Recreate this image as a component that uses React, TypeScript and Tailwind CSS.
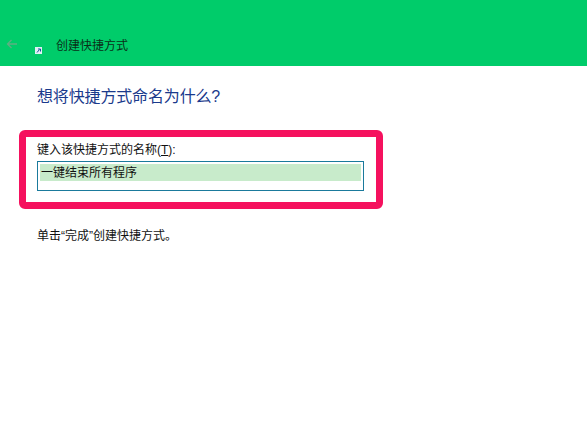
import React from 'react';

const font = { fontFamily: '"Liberation Sans", "Noto Sans CJK SC", sans-serif' };

const App = () => {
  return (
    <div className="w-[587px] h-[430px] bg-white overflow-hidden text-[12px] text-[#111]" style={font}>
      <div className="h-[66px] bg-[#00cc6a] flex items-end pb-[11px]">
        <svg width="12" height="10" viewBox="0 0 12 10" className="ml-[6px] mb-[6px]" fill="none" stroke="#5fae82" strokeWidth="1.3">
          <path d="M11 5H1.5M5.5 1 1.5 5l4 4" />
        </svg>
        <svg width="7" height="7" viewBox="0 0 7 7" className="ml-[17px] mb-[1px]">
          <rect width="7" height="7" fill="#dff0f5" />
          <path d="M2 5.5 4.5 2.5M3 2h2.5v2.5" stroke="#1a4f9c" strokeWidth="1" fill="none" />
        </svg>
        <span className="ml-[14px] leading-[18px] text-[#0a3018]">创建快捷方式</span>
      </div>

      <div className="pl-[37px] pt-[20px]">
        <h1 className="text-[16px] leading-[22px] font-normal tracking-[-0.15px] text-[#1a3a8c]">想将快捷方式命名为什么?</h1>
      </div>

      <div className="ml-[19px] mt-[22px] w-[364px] h-[79px] border-[7px] border-[#f5115e] rounded-[6px] pl-[11px] pr-[12px] pt-[4px]">
        <div className="leading-[18px]">
          键入该快捷方式的名称(<span className="underline">T</span>):
        </div>
        <div className="mt-[2px] h-[30px] border border-[#1a7a9c] p-[2px]">
          <div className="h-[17px] bg-[#c8ebcb] leading-[19px] pl-[1px]">一键结束所有程序</div>
        </div>
      </div>

      <div className="pl-[37px] mt-[18px] leading-[18px]">单击“完成”创建快捷方式。</div>
    </div>
  );
};

export default App;
